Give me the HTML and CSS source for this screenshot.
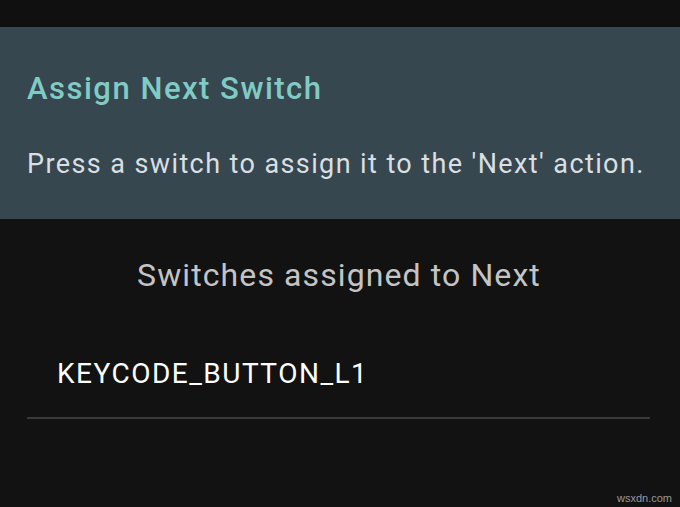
FILE: index.html
```html
<!DOCTYPE html>
<html>
<head>
<meta charset="utf-8">
<link rel="stylesheet" href="styles.css">
</head>
<body>
<div class="screen">
  <div class="statusbar"></div>
  <div class="header">
    <div class="title">Assign Next Switch</div>
    <div class="subtitle">Press a switch to assign it to the 'Next' action.</div>
  </div>
  <div class="content">
    <div class="section-title">Switches assigned to Next</div>
    <div class="item">KEYCODE_BUTTON_L1</div>
    <div class="divider"></div>
  </div>
  <div class="watermark">wsxdn.com</div>
</div>
</body>
</html>
```
FILE: styles.css
```css
html, body {
  margin: 0;
  padding: 0;
  background: #121212;
}
.screen {
  position: relative;
  width: 680px;
  height: 507px;
  overflow: hidden;
  background: #121212;
  font-family: Roboto, "Noto Sans", sans-serif;
}
.statusbar {
  height: 27px;
  background: #101010;
}
.header {
  height: 192px;
  box-sizing: border-box;
  background: #37474f;
  padding: 42px 0 0 27px;
}
.title {
  color: #80cbc4;
  font-size: 31px;
  font-weight: 500;
  line-height: 40px;
  letter-spacing: 1.5px;
}
.subtitle {
  margin-top: 39px;
  color: #d9dfe2;
  font-size: 27px;
  line-height: 32px;
  letter-spacing: 1.4px;
  white-space: nowrap;
}
.content {
  padding: 0 30px 0 27px;
}
.section-title {
  margin-top: 37px;
  text-align: center;
  color: #c4c4c4;
  font-size: 32px;
  line-height: 38px;
  letter-spacing: 1.1px;
  padding-left: 1px;
}
.item {
  margin-top: 63px;
  padding-left: 30px;
  color: #ffffff;
  font-size: 28px;
  line-height: 34px;
  letter-spacing: 1.5px;
}
.divider {
  margin-top: 26px;
  height: 2px;
  background: #3a3a3a;
}
.watermark {
  position: absolute;
  right: 8px;
  bottom: 3px;
  color: #9a9a9a;
  font-size: 11px;
  font-family: "Liberation Sans", sans-serif;
}
```
